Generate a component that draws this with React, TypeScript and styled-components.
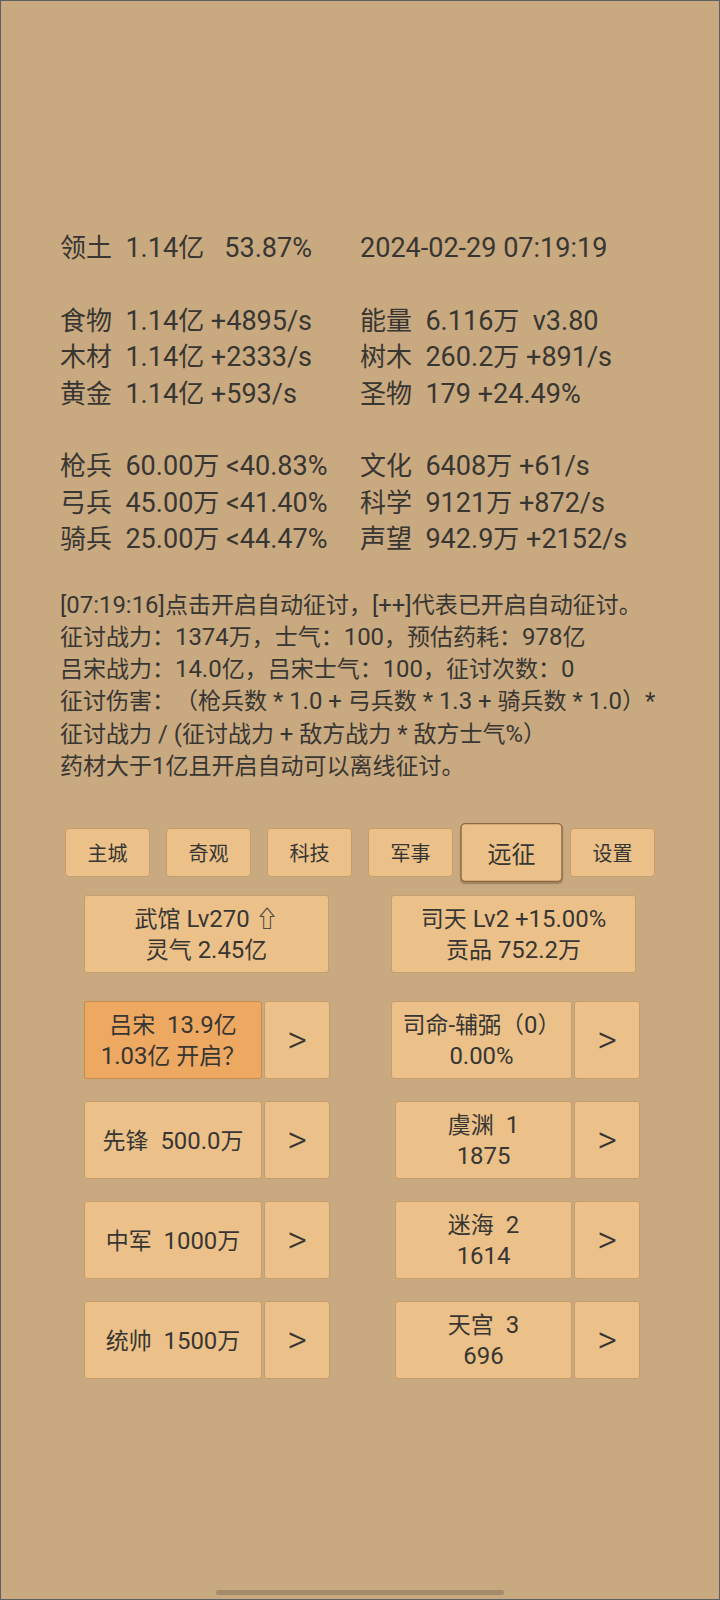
import React from 'react';
import styled, { createGlobalStyle, css } from 'styled-components';

const GlobalStyle = createGlobalStyle`
  html, body {
    margin: 0;
    padding: 0;
    background: #c9a97f;
  }
  * {
    box-sizing: border-box;
  }
`;

const font = `Roboto, "Noto Sans CJK SC", sans-serif`;

const colors = {
  bg: '#c9a97f',
  box: '#ebc189',
  boxBorder: '#c79d6b',
  active: '#eda862',
  activeBorder: '#c98a4c',
  text: '#383633',
};

const Screen = styled.div`
  width: 720px;
  height: 1600px;
  border: 1px solid #5e6068;
  background: ${colors.bg};
  color: ${colors.text};
  font-family: ${font};
  text-spacing-trim: space-all;
  display: flex;
  flex-direction: column;
  padding-top: 229px;
  overflow: hidden;
`;

// latin runs render a touch larger than the CJK glyphs, as on the device
const Latin = styled.span`
  font-size: 1.04em;
  line-height: 1;
`;

const mix = (text: string) =>
  text
    .split(/([\x20-\x7e]+)/)
    .filter(Boolean)
    .map((part, i) =>
      /^[\x20-\x7e]/.test(part) ? <Latin key={i}>{part}</Latin> : part
    );

const StatsGrid = styled.div`
  display: grid;
  grid-template-columns: 300px 300px;
  padding-left: 59px;
  font-size: 26px;
  line-height: 36.4px;
`;

const StatCell = styled.div`
  white-space: pre;
  height: 36.4px;
`;

const Log = styled.div`
  margin-top: 32px;
  padding-left: 59px;
  font-size: 23px;
  line-height: 32.3px;
  white-space: pre;
`;

const Tabs = styled.div`
  margin-top: 45px;
  display: flex;
  justify-content: center;
  gap: 16px;
`;

const Tab = styled.div<{ $active?: boolean }>`
  width: 85px;
  height: 49px;
  display: flex;
  align-items: center;
  justify-content: center;
  background: ${colors.box};
  border: 1px solid ${colors.boxBorder};
  border-radius: 4px;
  font-size: 20px;
  ${(p) =>
    p.$active &&
    css`
      transform: scale(1.2);
      border-color: #8a6a42;
      box-shadow: 0 1px 1px rgba(80, 55, 25, 0.35);
    `}
`;

const Panel = styled.div`
  margin-top: 18px;
  margin-left: 83px;
  display: grid;
  grid-template-columns: 246px 249px;
  column-gap: 61px;
  row-gap: 22px;
`;

const buttonBase = css`
  height: 78px;
  display: flex;
  flex-direction: column;
  align-items: center;
  justify-content: center;
  border: 1px solid ${colors.boxBorder};
  border-radius: 3px;
  font-size: 23px;
  line-height: 31px;
  white-space: pre;
  padding-top: 2px;
`;

const Card = styled.div<{ $width: number }>`
  ${buttonBase};
  width: ${(p) => p.$width}px;
  background: ${colors.box};
`;

const BuildingRow = styled.div`
  grid-column: 1 / 3;
  display: grid;
  grid-template-columns: 246px 249px;
  column-gap: 61px;
  margin-bottom: 6px;
`;

const Pair = styled.div<{ $right?: boolean }>`
  display: flex;
  gap: 2px;
  justify-content: ${(p) => (p.$right ? 'flex-end' : 'flex-start')};
`;

const MainButton = styled.div<{ $width: number; $on?: boolean }>`
  ${buttonBase};
  width: ${(p) => p.$width}px;
  background: ${(p) => (p.$on ? colors.active : colors.box)};
  border-color: ${(p) => (p.$on ? colors.activeBorder : colors.boxBorder)};
`;

const ArrowButton = styled.div`
  ${buttonBase};
  width: 66px;
  background: ${colors.box};
  font-size: 38px;
  font-weight: 300;
  padding-top: 0;
`;

const HomeBar = styled.div`
  margin: auto auto 4px;
  width: 288px;
  height: 5px;
  border-radius: 3px;
  background: #a48c6a;
`;

const stats: (string[] | null)[] = [
  ['领土  1.14亿   53.87%', '2024-02-29 07:19:19'],
  null,
  ['食物  1.14亿 +4895/s', '能量  6.116万  v3.80'],
  ['木材  1.14亿 +2333/s', '树木  260.2万 +891/s'],
  ['黄金  1.14亿 +593/s', '圣物  179 +24.49%'],
  null,
  ['枪兵  60.00万 <40.83%', '文化  6408万 +61/s'],
  ['弓兵  45.00万 <41.40%', '科学  9121万 +872/s'],
  ['骑兵  25.00万 <44.47%', '声望  942.9万 +2152/s'],
];

const logLines = [
  '[07:19:16]点击开启自动征讨，[++]代表已开启自动征讨。',
  '征讨战力：1374万，士气：100，预估药耗：978亿',
  '吕宋战力：14.0亿，吕宋士气：100，征讨次数：0',
  '征讨伤害：（枪兵数 * 1.0 + 弓兵数 * 1.3 + 骑兵数 * 1.0）*',
  '征讨战力 / (征讨战力 + 敌方战力 * 敌方士气%）',
  '药材大于1亿且开启自动可以离线征讨。',
];

const tabs = ['主城', '奇观', '科技', '军事', '远征', '设置'];

type Btn = { lines: string[]; width: number; on?: boolean };

const rows: [Btn, Btn][] = [
  [
    { lines: ['吕宋  13.9亿', '1.03亿 开启？'], width: 178, on: true },
    { lines: ['司命-辅弼（0）', '0.00%'], width: 181 },
  ],
  [
    { lines: ['先锋  500.0万'], width: 178 },
    { lines: ['虞渊  1', '1875'], width: 177 },
  ],
  [
    { lines: ['中军  1000万'], width: 178 },
    { lines: ['迷海  2', '1614'], width: 177 },
  ],
  [
    { lines: ['统帅  1500万'], width: 178 },
    { lines: ['天宫  3', '696'], width: 177 },
  ],
];

export default function App() {
  return (
    <>
      <GlobalStyle />
      <Screen>
        <StatsGrid>
          {stats.map((row, i) =>
            row ? (
              row.map((cell, j) => <StatCell key={`${i}-${j}`}>{mix(cell)}</StatCell>)
            ) : (
              <React.Fragment key={i}>
                <StatCell />
                <StatCell />
              </React.Fragment>
            )
          )}
        </StatsGrid>

        <Log>
          {logLines.map((line) => (
            <div key={line}>{mix(line)}</div>
          ))}
        </Log>

        <Tabs>
          {tabs.map((t) => (
            <Tab key={t} $active={t === '远征'}>
              {t}
            </Tab>
          ))}
        </Tabs>

        <Panel>
          <BuildingRow>
            <Card $width={245}>
              <div>{mix('武馆 Lv270 ')}⇧</div>
              <div>{mix('灵气 2.45亿')}</div>
            </Card>
            <Card $width={245}>
              <div>{mix('司天 Lv2 +15.00%')}</div>
              <div>{mix('贡品 752.2万')}</div>
            </Card>
          </BuildingRow>

          {rows.map(([left, right], i) => (
            <React.Fragment key={i}>
              <Pair>
                <MainButton $width={left.width} $on={left.on}>
                  {left.lines.map((l) => (
                    <div key={l}>{mix(l)}</div>
                  ))}
                </MainButton>
                <ArrowButton>&gt;</ArrowButton>
              </Pair>
              <Pair $right>
                <MainButton $width={right.width}>
                  {right.lines.map((l) => (
                    <div key={l}>{mix(l)}</div>
                  ))}
                </MainButton>
                <ArrowButton>&gt;</ArrowButton>
              </Pair>
            </React.Fragment>
          ))}
        </Panel>

        <HomeBar />
      </Screen>
    </>
  );
}
